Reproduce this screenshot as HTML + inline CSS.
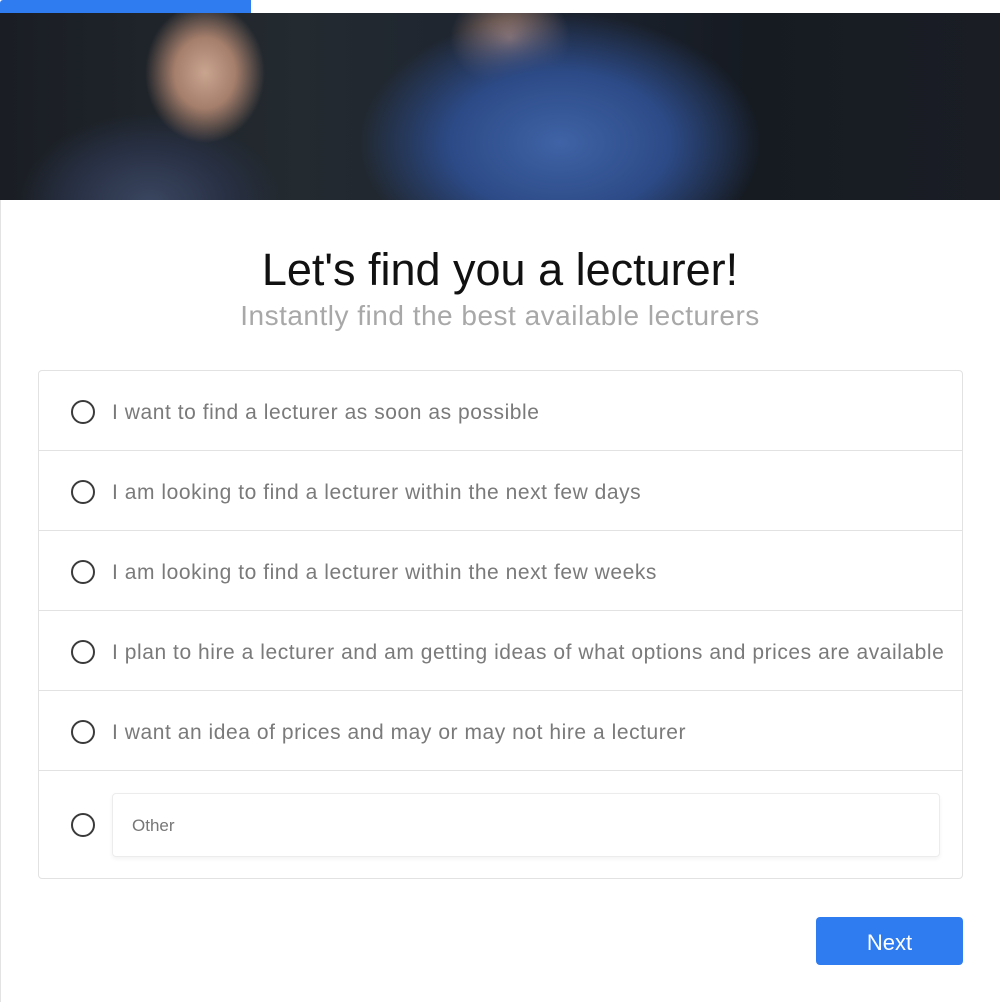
<!DOCTYPE html>
<html><head><style>
*{margin:0;padding:0;box-sizing:border-box}
body{width:1000px;height:1002px;background:#fff;font-family:"Liberation Sans",sans-serif;position:relative;overflow:hidden}
.bar{position:absolute;left:0;top:0;width:251px;height:13px;background:#2f7cf0;border-radius:3px 0 0 0}
.hero{position:absolute;left:0;top:13px;width:1000px;height:187px;background:
radial-gradient(ellipse 60px 70px at 205px 60px,#c9a48f 0,#a67f6c 50%,transparent 100%),
radial-gradient(ellipse 130px 90px at 150px 190px,#3a4660 0,#283044 60%,transparent 100%),
radial-gradient(ellipse 200px 130px at 560px 130px,#3f63a6 0,#2c4a86 55%,transparent 100%),
radial-gradient(ellipse 60px 50px at 510px 25px,#a9826f 0,transparent 100%),
linear-gradient(90deg,#1a1e24 0,#232a30 30%,#1c2330 55%,#161b22 75%,#1a1d24 100%)}
.page{position:absolute;left:0;top:200px;width:1000px;height:802px;border-left:1px solid #e3e3e3}
h1{position:absolute;top:244px;left:0;width:1000px;text-align:center;font-weight:400;font-size:45px;color:#111;letter-spacing:0}
h2{position:absolute;top:300px;left:0;width:1000px;text-align:center;font-weight:400;font-size:28px;color:#a8a8a8;letter-spacing:0.5px}
.box{position:absolute;left:38px;top:370px;width:925px;height:509px;border:1px solid #e2e2e2;border-radius:4px}
.row{height:80px;border-bottom:1px solid #e2e2e2;position:relative}
.row span{position:absolute;left:73px;top:30px;font-size:21px;color:#7a7a7a;letter-spacing:0.55px;white-space:nowrap}
.r{position:absolute;left:32px;top:29px;width:24px;height:24px;border:2px solid #3a3a3a;border-radius:50%}
.last{height:107px;border:none}
.last .r{top:42px}
.inp{position:absolute;left:73px;top:22px;width:828px;height:64px;border:1px solid #ececec;border-radius:4px;box-shadow:0 2px 4px rgba(0,0,0,0.05);font-size:17px;color:#777;padding:22px 19px}
.next{position:absolute;left:816px;top:917px;width:147px;height:48px;background:#2f7cf0;border-radius:4px;color:#fff;font-size:22px;text-align:center;line-height:52px}
</style></head><body>
<div class="bar"></div>
<div class="hero"></div>
<div class="page"></div>
<h1>Let's find you a lecturer!</h1>
<h2>Instantly find the best available lecturers</h2>
<div class="box">
<div class="row"><div class="r"></div><span>I want to find a lecturer as soon as possible</span></div>
<div class="row"><div class="r"></div><span>I am looking to find a lecturer within the next few days</span></div>
<div class="row"><div class="r"></div><span>I am looking to find a lecturer within the next few weeks</span></div>
<div class="row"><div class="r"></div><span>I plan to hire a lecturer and am getting ideas of what options and prices are available</span></div>
<div class="row"><div class="r"></div><span>I want an idea of prices and may or may not hire a lecturer</span></div>
<div class="row last"><div class="r"></div><div class="inp">Other</div></div>
</div>
<div class="next">Next</div>
</body></html>
